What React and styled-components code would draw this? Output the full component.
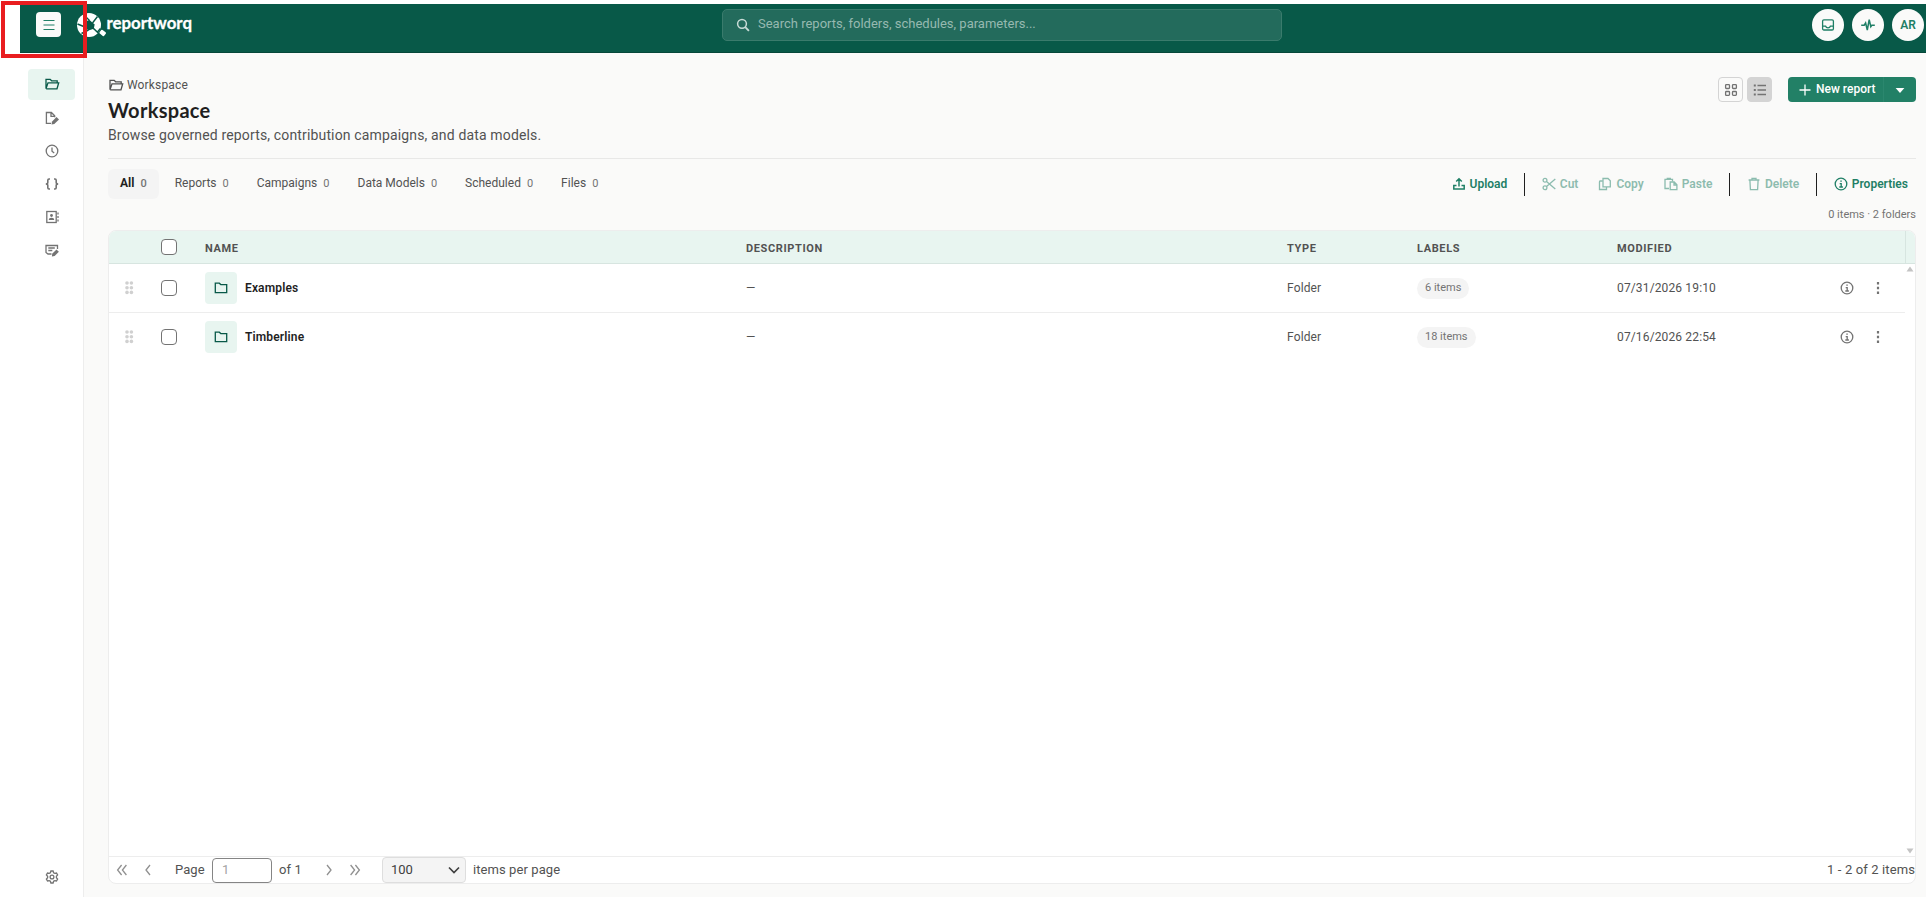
import React from "react"
import styled, { createGlobalStyle } from "styled-components"

const GlobalStyle = createGlobalStyle`
  * {
    box-sizing: border-box;
  }
  body {
    margin: 0;
    background: #fff;
    font-family: Roboto, "Liberation Sans", sans-serif;
    color: #525252;
    overflow: hidden;
  }
  button, input {
    font-family: inherit;
  }
`

const Page = styled.div`
  position: relative;
  display: flex;
  flex-direction: column;
  width: 100%;
  height: 100vh;
  padding: 4px 0 0 20px;
`

const Header = styled.header`
  display: flex;
  align-items: flex-start;
  flex: none;
  height: 49px;
  padding: 5px 2px 0 16px;
  background: #085948;
  border-bottom: 1px solid #06483a;
`

const HeaderSide = styled.div`
  display: flex;
  flex: 1;
  align-items: center;
  justify-content: ${({ $end }) => ($end ? "flex-end" : "flex-start")};
  gap: ${({ $end }) => ($end ? "8px" : "16px")};
  height: 32px;
`

const MenuButton = styled.button`
  display: flex;
  align-items: center;
  justify-content: center;
  width: 25px;
  height: 25px;
  margin-bottom: 1px;
  padding: 0;
  border: 0;
  border-radius: 4px;
  background: #fafaf9;
  color: #1f7f66;
`

const Logo = styled.svg`
  display: block;
  width: 118px;
  height: 28px;
  text {
    font-family: Lato, sans-serif;
    font-size: 17px;
    font-weight: 700;
    fill: #fff;
    stroke: #fff;
    stroke-width: 0.3px;
  }
`

const Search = styled.div`
  display: flex;
  align-items: center;
  gap: 7px;
  width: 560px;
  height: 32px;
  margin-left: 44px;
  padding: 0 12px 1px;
  border: 1px solid #3a7b6c;
  border-radius: 5px;
  background: #236b5c;
  color: #c9dcd7;
  font-size: 13px;
  span {
    color: #96b9b0;
    padding-bottom: 2px;
  }
`

const RoundButton = styled.button`
  display: flex;
  align-items: center;
  justify-content: center;
  width: 32px;
  height: 32px;
  padding: 0 0 1px;
  border: 0;
  border-radius: 50%;
  background: #fafaf9;
  color: #1f7f66;
  font-size: 12px;
  font-weight: 600;
`

const Body = styled.div`
  display: flex;
  flex: 1;
  min-height: 0;
`

const Sidebar = styled.nav`
  display: flex;
  flex-direction: column;
  gap: 2px;
  width: 64px;
  padding: 16px 8px 5px;
  border-right: 1px solid #ededed;
`

const SideItem = styled.a`
  display: flex;
  align-items: center;
  justify-content: center;
  height: 31px;
  padding-bottom: ${({ $active }) => ($active ? "1px" : "0")};
  border-radius: 4px;
  margin-top: ${({ $last }) => ($last ? "auto" : "0")};
  background: ${({ $active }) => ($active ? "#e8f5f0" : "transparent")};
  color: ${({ $active }) => ($active ? "#085948" : "#737373")};
`

const Main = styled.main`
  display: flex;
  flex: 1;
  flex-direction: column;
  padding: 24px 10px 13px 24px;
  background: #fafaf9;
`

const PageHead = styled.div`
  display: flex;
  justify-content: space-between;
  height: 82px;
  border-bottom: 1px solid #e8e8e7;
`

const Breadcrumb = styled.div`
  display: flex;
  align-items: center;
  gap: 3px;
  height: 16px;
  font-size: 12px;
  letter-spacing: 0.15px;
`

const Title = styled.h1`
  margin: 5px 0 0;
  font-family: "Trebuchet MS", Lato, sans-serif;
  font-size: 20px;
  line-height: 24px;
  font-weight: 700;
  letter-spacing: 0.3px;
  color: #1f1f1f;
`

const Subtitle = styled.p`
  margin: 3px 0 0;
  font-size: 14px;
  line-height: 20px;
  letter-spacing: 0.15px;
`

const HeadActions = styled.div`
  display: flex;
  align-items: flex-start;
`

const ViewButton = styled.button`
  display: flex;
  align-items: center;
  justify-content: center;
  width: 25px;
  height: 25px;
  margin-right: ${({ $active }) => ($active ? "16px" : "4px")};
  padding: 0;
  border: 1px solid #d4d4d4;
  border-radius: 4px;
  background: ${({ $active }) => ($active ? "#d4d4d4" : "#fafaf9")};
  color: #737373;
`

const SplitButton = styled.div`
  display: flex;
  height: 25px;
  border-radius: 4px;
  background: #228066;
  color: #fff;
  font-size: 12px;
  font-weight: 500;
`

const SplitMain = styled.div`
  display: flex;
  align-items: center;
  gap: 3px;
  width: 96px;
  padding-left: 9px;
  border-right: 1px solid #2b876e;
  span {
    padding-bottom: 2px;
  }
`

const SplitArrow = styled.div`
  display: flex;
  align-items: center;
  justify-content: center;
  width: 32px;
`

const Toolbar = styled.div`
  display: flex;
  justify-content: space-between;
  align-items: center;
  height: 30px;
  margin-top: 10px;
`

const Tabs = styled.div`
  display: flex;
  gap: 4px;
`

const Tab = styled.div`
  display: flex;
  align-items: center;
  gap: 6px;
  height: 30px;
  padding: 0 12px 2px;
  border-radius: 6px;
  font-size: 12px;
  background: ${({ $active }) => ($active ? "#f4f4f4" : "transparent")};
  color: ${({ $active }) => ($active ? "#1f1f1f" : "#525252")};
  font-weight: ${({ $active }) => ($active ? 700 : 400)};
  small {
    font-size: 11px;
    color: #737373;
    font-weight: ${({ $active }) => ($active ? 500 : 400)};
  }
`

const Actions = styled.div`
  display: flex;
  align-items: center;
`

const Action = styled.div`
  display: flex;
  align-items: center;
  gap: 3px;
  padding: 0 8px;
  margin-left: ${({ $spaced }) => ($spaced ? "3px" : "0")};
  font-size: 12px;
  font-weight: 600;
  color: #1f7f66;
  opacity: ${({ $disabled }) => ($disabled ? 0.5 : 1)};
`

const Divider = styled.div`
  width: 1px;
  height: 23px;
  margin: 0 8px 0 8.5px;
  background: #1f1f1f;
`

const Summary = styled.div`
  height: 31px;
  padding-top: 9px;
  text-align: right;
  font-size: 11px;
  line-height: 14px;
  color: #737373;
`

const Grid = styled.section`
  display: flex;
  flex: 1;
  flex-direction: column;
  overflow: hidden;
  border: 1px solid #ededed;
  border-radius: 8px;
  background: #fff;
`

const columns = "52px 44px 541px 541px 130px 200px 1fr"

const GridHead = styled.div`
  display: flex;
  height: 33px;
  flex: none;
  background: #e8f5f0;
  border-bottom: 1px solid #d7e5e0;
`

const HeadCells = styled.div`
  display: grid;
  grid-template-columns: ${columns};
  align-items: center;
  flex: 1;
  border-right: 1px solid #d7e5e0;
  font-size: 11px;
  font-weight: 700;
  letter-spacing: 0.63px;
  text-transform: uppercase;
`

const HeadLabel = styled.span`
  padding-top: 2px;
`

const ScrollCorner = styled.div`
  width: 9px;
`

const GridBody = styled.div`
  display: flex;
  flex: 1;
`

const Rows = styled.div`
  flex: 1;
`

const Row = styled.div`
  display: grid;
  grid-template-columns: ${columns};
  align-items: center;
  height: 49px;
  border-bottom: ${({ $last }) => ($last ? "0" : "1px")} solid #ededed;
  padding-bottom: ${({ $last }) => ($last ? "1px" : "0")};
  font-size: 12px;
  letter-spacing: 0.14px;
`

const Scrollbar = styled.div`
  display: flex;
  flex-direction: column;
  justify-content: space-between;
  align-items: center;
  width: 10px;
  padding: 1px 0;
  color: #c4c4c4;
`

const Handle = styled.span`
  display: flex;
  padding-left: 15.5px;
  color: #d0d0d0;
`

const Checkbox = styled.span`
  display: block;
  width: 16px;
  height: 16px;
  border: 1px solid #737373;
  border-radius: 4px;
  background: #fff;
`

const NameCell = styled.div`
  display: flex;
  align-items: center;
  gap: 8px;
  font-weight: 600;
  color: #1f1f1f;
`

const Tile = styled.span`
  display: flex;
  align-items: center;
  justify-content: center;
  width: 32px;
  height: 32px;
  border-radius: 4px;
  background: #e8f5f0;
  color: #085948;
`

const Pill = styled.span`
  display: inline-block;
  height: 21px;
  padding: 0 8px;
  border-radius: 11px;
  background: #f4f4f4;
  color: #737373;
  font-size: 11px;
  line-height: 19px;
  letter-spacing: 0;
`

const ModifiedCell = styled.div`
  display: flex;
  align-items: center;
  justify-content: space-between;
`

const RowActions = styled.div`
  display: flex;
  justify-content: flex-end;
  gap: 15px;
  padding-right: 19px;
  color: #737373;
`

const Pager = styled.footer`
  display: flex;
  align-items: center;
  flex: none;
  height: 27px;
  border-top: 1px solid #ededed;
  font-size: 13px;
  color: #525252;
`

const PagerButton = styled.button`
  display: flex;
  align-items: center;
  justify-content: center;
  width: 26px;
  height: 26px;
  padding: 0;
  border: 0;
  background: none;
  color: #909090;
`

const PagerLabel = styled.span`
  width: ${({ $w }) => $w}px;
  padding: 0 0 1px ${({ $pad }) => $pad}px;
  white-space: nowrap;
  letter-spacing: 0.08px;
`

const PageInput = styled.div`
  width: 60px;
  height: 25px;
  padding-left: 9px;
  border: 1px solid #858585;
  border-radius: 4px;
  line-height: 22px;
  color: #a3a3a3;
`

const PageSize = styled.div`
  display: flex;
  align-items: center;
  justify-content: space-between;
  width: 84px;
  height: 26px;
  margin-left: 14px;
  padding: 0 3px 1px 8px;
  border: 1px solid #dedede;
  border-radius: 4px;
  background: #f4f4f4;
  color: #404040;
`

const Total = styled.span`
  margin-left: auto;
  padding-bottom: 1px;
  letter-spacing: 0.12px;
`

const Highlight = styled.div`
  position: absolute;
  left: 1px;
  top: 1px;
  width: 86px;
  height: 57px;
  border: 4px solid #e91d20;
`

const paths = {
  menu: <path d="M2.5 3.5h11M2.5 8h11M2.5 12.5h11" strokeWidth="1" />,
  folderOpen: (
    <path d="M2 12.8V3.4h4.2l1.4 1.4h5.6v2M2 12.8l2-6h10.7l-1.7 6H2.2" />
  ),
  folder: <path d="M2.3 3.2h4l1.5 1.4h5.9v8H2.3z" />,
  docEdit: (
    <>
      <path d="M7 13.4H2.4V2.5h5l3.3 3.3v1.4M7 2.8v3.5h3.5" />
      <path
        d="M7.9 11.7l4.6-4.6 2.5 2.3-4.700 4.500-2.700.6z"
        fill="currentColor"
        stroke="none"
      />
    </>
  ),
  clock: (
    <>
      <circle cx="8" cy="8" r="5.8" />
      <path d="M8 4.6v3.6l2.2 1.8" />
    </>
  ),
  braces: (
    <path
      d="M6 3H5Q3.8 3 3.8 4.2v2.2Q3.8 8 1.8 8q2 0 2 1.6v2.2Q3.8 13 5 13h1M10 3h1q1.2 0 1.2 1.2v2.2q0 1.6 2 1.6q-2 0-2 1.6v2.2Q12.2 13 11 13h-1"
      strokeWidth="1.6"
    />
  ),
  contacts: (
    <>
      <rect x="2.8" y="2.5" width="9.4" height="11" />
      <path d="M14 3.5v2M14 7v2M14 10.5v2" />
      <circle cx="7.5" cy="6.5" r="1.4" fill="currentColor" stroke="none" />
      <path
        d="M4.8 11q0-2.3 2.7-2.3T10.2 11z"
        fill="currentColor"
        stroke="none"
      />
    </>
  ),
  formEdit: (
    <>
      <path d="M7.5 12H4l-2-1.5v-7h11.5V7M4.3 6h6.5M4.3 8.5h4" />
      <path
        d="M8.2 11.700l4.300-4.300 2.400 2.300-4.300 4.300-2.700.5z"
        fill="currentColor"
        stroke="none"
      />
    </>
  ),
  gear: (
    <>
      <path d="M6.9 2h2.2l.5 1.7 1.2.7 1.7-.4 1.1 1.9L12.4 7.2v1.6l1.2 1.3-1.1 1.9-1.7-.4-1.2.7-.5 1.7H6.9l-.5-1.7-1.2-.7-1.7.4-1.1-1.9 1.2-1.3V7.2L2.4 5.9 3.5 4l1.7.4 1.2-.7z" />
      <circle cx="8" cy="8" r="1.9" />
    </>
  ),
  search: (
    <>
      <circle cx="7" cy="6.8" r="4.4" strokeWidth="1.5" />
      <path d="M10.3 10.2l3.6 3.6" strokeWidth="1.9" />
    </>
  ),
  inbox: (
    <>
      <rect x="2.6" y="2.8" width="10.8" height="10.2" rx="1.3" />
      <path d="M2.6 9.2h3q.5 1.6 2.4 1.6t2.4-1.6h3" />
    </>
  ),
  pulse: (
    <path
      d="M1.2 8.2h3l1.4-2.2 1.7 7L9.2 2.6l1.6 7 1-1.4h3"
      strokeWidth="1.5"
    />
  ),
  tiles: (
    <>
      <rect x="2.6" y="2.6" width="3.9" height="3.9" rx=".8" />
      <rect x="9.5" y="2.6" width="3.9" height="3.9" rx=".8" />
      <rect x="2.6" y="9.5" width="3.9" height="3.9" rx=".8" />
      <rect x="9.5" y="9.5" width="3.9" height="3.9" rx=".8" />
    </>
  ),
  list: (
    <>
      <path d="M5.5 3.5H14M5.5 8H14M5.5 12.5H14" />
      <path d="M1.8 3.5h2M1.8 8h2M1.8 12.5h2" strokeWidth="2" />
    </>
  ),
  plus: <path d="M8 2.5v11M2.5 8h11" />,
  caret: <path d="M3.6 6h8.8L8 10.9z" fill="currentColor" stroke="none" />,
  upload: (
    <path
      d="M5.5 9.5H2.8v3.500h10.400V9.500H10.500M8 10.500V3M5.200 5.500L8 2.700l2.800 2.800"
      strokeWidth="1.5"
    />
  ),
  cut: (
    <>
      <circle cx="4" cy="4.2" r="1.9" />
      <circle cx="4" cy="11.8" r="1.9" />
      <path d="M5.5 5.5L14.3 13M5.5 10.5L14.3 3" />
    </>
  ),
  copy: (
    <>
      <path d="M6 2.5h5l2.3 2.3v6H6z" />
      <path d="M5.8 5H3Q2.5 5 2.5 6v7.5h7V11" />
    </>
  ),
  paste: (
    <>
      <path d="M6 12.5H2V3.4h7.5v2M4.3 3.4V2.5h3v.9" />
      <path d="M7.2 6h4l2.7 2.7v5H7.2zM11 6.2V9h2.7" />
    </>
  ),
  trash: (
    <path d="M2.6 4h10.8M6 3.8V2.4h4v1.4M3.9 4.2l.5 9.4h7.2l.5-9.4" />
  ),
  info: (
    <>
      <circle cx="8" cy="8" r="5.8" />
      <path d="M6.7 7.6H8.2v3.3M6.3 11h3.6M7.3 5.2h1.5" />
    </>
  ),
  dots: (
    <path
      d="M6.9 2h2.2v2.4H6.9zM6.9 6.800h2.200v2.400H6.900zM6.900 11.600h2.200V14H6.900z"
      fill="currentColor"
      stroke="none"
    />
  ),
  first: <path d="M7.6 3L3.6 8l4 5M12.4 3l-4 5 4 5" />,
  prev: <path d="M10 3L6 8l4 5" />,
  next: <path d="M6 3l4 5-4 5" />,
  last: <path d="M3.6 3l4 5-4 5M8.4 3l4 5-4 5" />,
  chevron: <path d="M3 5.5l5 5 5-5" strokeWidth="1.7" />,
}

const Icon = ({ name, size = 16 }) => (
  <svg
    width={size}
    height={size}
    viewBox="0 0 16 16"
    fill="none"
    stroke="currentColor"
    strokeWidth="1.3"
    style={{ flex: "none" }}
  >
    {paths[name]}
  </svg>
)

const sideItems = ["docEdit", "clock", "braces", "contacts", "formEdit"]

const tabs = ["All", "Reports", "Campaigns", "Data Models", "Scheduled", "Files"]

const heads = ["Name", "Description", "Type", "Labels", "Modified"]

const rows = [
  { name: "Examples", items: 6, modified: "07/31/2026 19:10" },
  { name: "Timberline", items: 18, modified: "07/16/2026 22:54" },
]

const DragHandle = () => (
  <svg width="9" height="14" viewBox="0 0 9 14" fill="currentColor">
    {[2, 6.7, 11.4].map(y => (
      <React.Fragment key={y}>
        <circle cx="2" cy={y} r="1.8" />
        <circle cx="6.4" cy={y} r="1.8" />
      </React.Fragment>
    ))}
  </svg>
)

const Brand = () => (
  <Logo viewBox="0 0 118 28">
    <circle cx="12" cy="14" r="12" fill="#fff" />
    <path d="M8 10.500L12.500 9l4.500 4-1 5-4.500 1.500L8 16z" fill="#085948" />
    <path
      d="M6 3l6.500 6.500M20.500 5.500L15.500 12M17 13l-1 5M11.500 19l-7 3.500M8 16L.5 13M8 16v-6"
      stroke="#085948"
      strokeWidth="1.4"
      fill="none"
    />
    <path d="M16 17l9.500 9M23.500 17.500l-3 3.500" stroke="#085948" strokeWidth="1.6" />
    <rect
      x="22.8"
      y="19.6"
      width="5.8"
      height="4.6"
      rx="1"
      transform="rotate(38 25.7 21.9)"
      fill="#fff"
    />
    <text x="29.5" y="18" textLength="85.5" lengthAdjust="spacingAndGlyphs">
      reportworq
    </text>
  </Logo>
)

const App = () => (
  <Page>
    <GlobalStyle />
    <Header>
      <HeaderSide>
        <MenuButton>
          <Icon name="menu" />
        </MenuButton>
        <Brand />
      </HeaderSide>
      <Search>
        <Icon name="search" />
        <span>Search reports, folders, schedules, parameters...</span>
      </Search>
      <HeaderSide $end>
        <RoundButton>
          <Icon name="inbox" />
        </RoundButton>
        <RoundButton>
          <Icon name="pulse" />
        </RoundButton>
        <RoundButton>AR</RoundButton>
      </HeaderSide>
    </Header>
    <Body>
      <Sidebar>
        <SideItem $active>
          <Icon name="folderOpen" />
        </SideItem>
        {sideItems.map(name => (
          <SideItem key={name}>
            <Icon name={name} />
          </SideItem>
        ))}
        <SideItem $last>
          <Icon name="gear" />
        </SideItem>
      </Sidebar>
      <Main>
        <PageHead>
          <div>
            <Breadcrumb>
              <Icon name="folderOpen" />
              Workspace
            </Breadcrumb>
            <Title>Workspace</Title>
            <Subtitle>
              Browse governed reports, contribution campaigns, and data models.
            </Subtitle>
          </div>
          <HeadActions>
            <ViewButton>
              <Icon name="tiles" />
            </ViewButton>
            <ViewButton $active>
              <Icon name="list" />
            </ViewButton>
            <SplitButton>
              <SplitMain>
                <Icon name="plus" />
                <span>New report</span>
              </SplitMain>
              <SplitArrow>
                <Icon name="caret" />
              </SplitArrow>
            </SplitButton>
          </HeadActions>
        </PageHead>
        <Toolbar>
          <Tabs>
            {tabs.map(tab => (
              <Tab key={tab} $active={tab === "All"}>
                {tab}
                <small>0</small>
              </Tab>
            ))}
          </Tabs>
          <Actions>
            <Action>
              <Icon name="upload" />
              Upload
            </Action>
            <Divider />
            <Action $disabled>
              <Icon name="cut" />
              Cut
            </Action>
            <Action $disabled $spaced>
              <Icon name="copy" />
              Copy
            </Action>
            <Action $disabled $spaced>
              <Icon name="paste" />
              Paste
            </Action>
            <Divider />
            <Action $disabled>
              <Icon name="trash" />
              Delete
            </Action>
            <Divider />
            <Action>
              <Icon name="info" />
              Properties
            </Action>
          </Actions>
        </Toolbar>
        <Summary>0 items · 2 folders</Summary>
        <Grid>
          <GridHead>
            <HeadCells>
              <span />
              <Checkbox />
              {heads.map(head => (
                <HeadLabel key={head}>{head}</HeadLabel>
              ))}
            </HeadCells>
            <ScrollCorner />
          </GridHead>
          <GridBody>
            <Rows>
              {rows.map((row, i) => (
                <Row key={row.name} $last={i === rows.length - 1}>
                  <Handle>
                    <DragHandle />
                  </Handle>
                  <Checkbox />
                  <NameCell>
                    <Tile>
                      <Icon name="folder" />
                    </Tile>
                    {row.name}
                  </NameCell>
                  <span>—</span>
                  <span>Folder</span>
                  <span>
                    <Pill>{row.items} items</Pill>
                  </span>
                  <ModifiedCell>
                    {row.modified}
                    <RowActions>
                      <Icon name="info" />
                      <Icon name="dots" />
                    </RowActions>
                  </ModifiedCell>
                </Row>
              ))}
            </Rows>
            <Scrollbar>
              <svg width="8" height="8" fill="currentColor">
                <path d="M4 1.5l3.5 5h-7z" />
              </svg>
              <svg width="8" height="8" fill="currentColor">
                <path d="M4 6.5l3.5-5h-7z" />
              </svg>
            </Scrollbar>
          </GridBody>
          <Pager>
            <PagerButton>
              <Icon name="first" />
            </PagerButton>
            <PagerButton>
              <Icon name="prev" />
            </PagerButton>
            <PagerLabel $w={51} $pad={14}>
              Page
            </PagerLabel>
            <PageInput>1</PageInput>
            <PagerLabel $w={44} $pad={7}>
              of 1
            </PagerLabel>
            <PagerButton>
              <Icon name="next" />
            </PagerButton>
            <PagerButton>
              <Icon name="last" />
            </PagerButton>
            <PageSize>
              100
              <Icon name="chevron" />
            </PageSize>
            <PagerLabel $w={100} $pad={7}>
              items per page
            </PagerLabel>
            <Total>1 - 2 of 2 items</Total>
          </Pager>
        </Grid>
      </Main>
    </Body>
    <Highlight />
  </Page>
)

export default App
